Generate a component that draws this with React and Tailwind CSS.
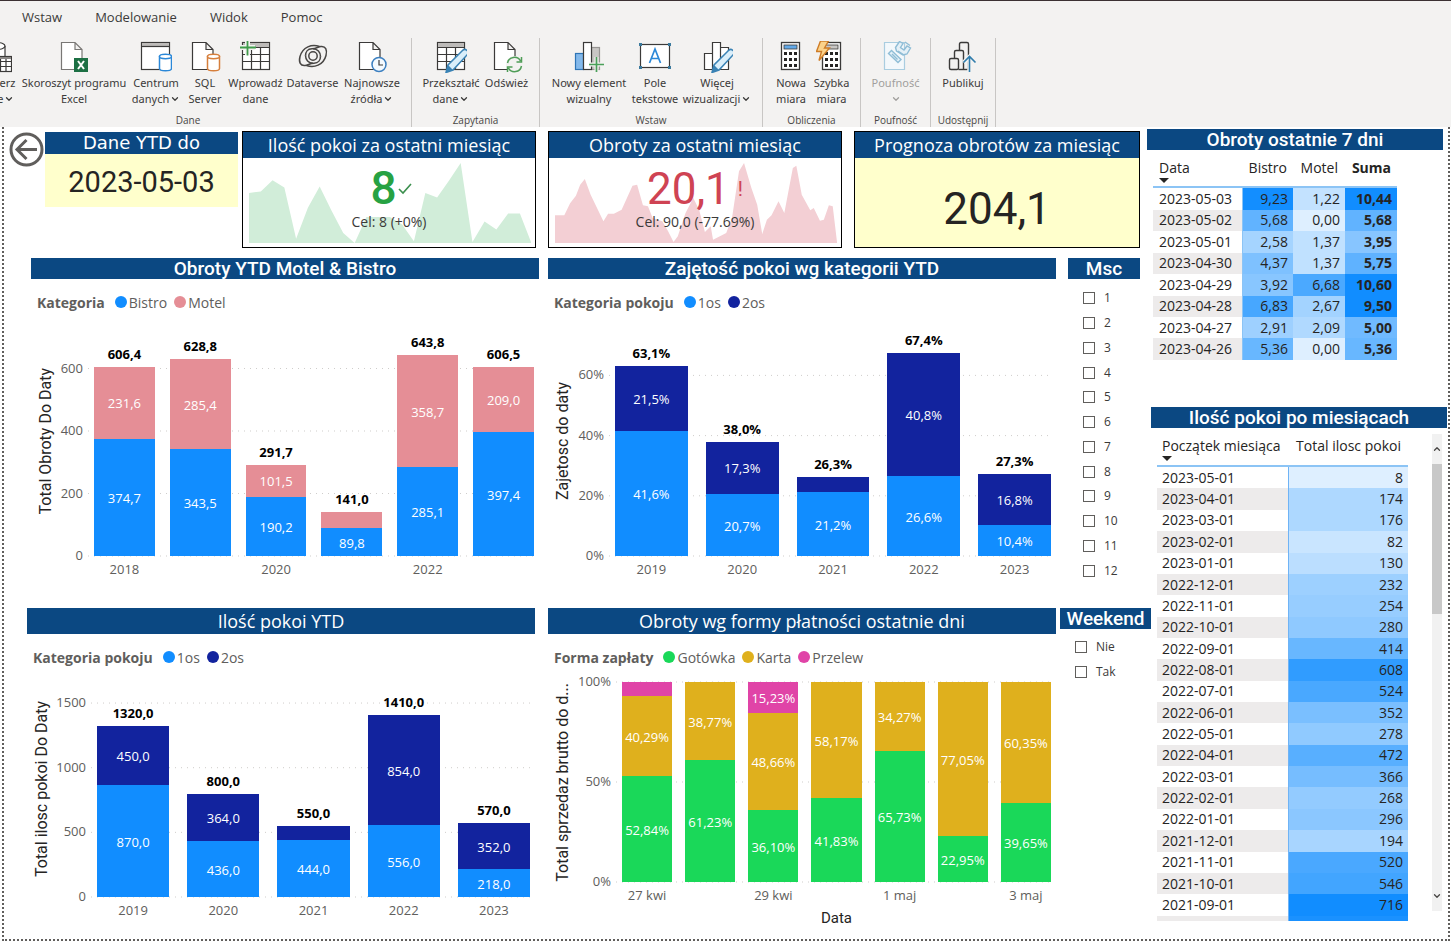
import { ChevronDown, ChevronUp } from "lucide-react";

const BLUE = "#118dff";
const NAVY = "#12239e";
const PINK = "#e58e96";
const GREEN = "#1ad859";
const GOLD = "#dfb01d";
const MAGENTA = "#e044a7";

const INK = "#3b3a39";

/* ---------- ribbon icons ---------- */

function Icon({ children }) {
  return (
    <svg viewBox="0 0 32 32" className="w-8 h-8 shrink-0" fill="none" strokeWidth="1.2" aria-hidden="true">
      {children}
    </svg>
  );
}

const Page = ({ stroke = INK }) => (
  <path d="M3.5 1.5h13.5l7 7v20H3.5zM17 1.5v7h7" fill="#fff" stroke={stroke} />
);

const Cylinder = ({ color }) => (
  <>
    <path d="M19.500 15.500v12c0 3 12 3 12 0v-12z" fill="#fff" stroke={color} strokeWidth="1.500" />
    <ellipse cx="25.500" cy="15.500" rx="6" ry="2.200" fill="#fff" stroke={color} strokeWidth="1.500" />
  </>
);

const Pencil = () => (
  <>
    <path
      d="M11 31.500l2-7.500L27.500 9.500a3 3 0 0 1 4.500 4.500L18 29z"
      fill="#d9eefa"
      stroke="#3a83b5"
      strokeWidth="1.500"
    />
    <path d="M11 31.500l2-7.500 5 5z" fill="#3a83b5" />
  </>
);

const Grid = () => (
  <>
    <rect x="2.500" y="1.500" width="27" height="27" fill="#fff" stroke={INK} />
    <rect x="3" y="2" width="26" height="4" fill="#bdbbb9" />
    <path d="M2.500 6.500h27M2.500 13.500h27M2.500 20.500h27M11.500 6.500v22M20.500 6.500v22" stroke={INK} />
  </>
);

const DatabaseTableIcon = () => (
  <Icon>
    <path d="M9 5v20c0 4 16 4 16 0V5" fill="#fff" stroke={INK} />
    <ellipse cx="17" cy="5" rx="8" ry="3.500" fill="#fff" stroke={INK} />
    <rect x="14.500" y="15.500" width="17" height="15" fill="#fff" stroke={INK} />
    <path d="M15 17h16" stroke="#8a8886" strokeWidth="2" />
    <path d="M14.500 20.500h17M14.500 25.500h17M20.500 18v12M26 18v12" stroke={INK} />
  </Icon>
);

const ExcelIcon = () => (
  <Icon>
    <Page stroke="#797775" />
    <rect x="16" y="17" width="14" height="14" fill="#1d7044" />
    <path d="M20 20l6 8M26 20l-6 8" stroke="#fff" strokeWidth="2" />
  </Icon>
);

const HubIcon = () => (
  <Icon>
    <rect x="1.500" y="1.500" width="28" height="27" fill="#fff" stroke={INK} />
    <rect x="2" y="2" width="27" height="3.500" fill="#bdbbb9" />
    <path d="M1.500 5.500h28" stroke={INK} />
    <Cylinder color="#2b88d8" />
  </Icon>
);

const SqlIcon = () => (
  <Icon>
    <Page />
    <g transform="translate(-1 0)">
      <Cylinder color="#d67f3c" />
    </g>
  </Icon>
);

const EnterDataIcon = () => (
  <Icon>
    <Grid />
    <path d="M0 6.500h15M7.500 -1v15" stroke="#f3f2f1" strokeWidth="5" />
    <path d="M0 6.500h16M7.500 0v14.500" stroke="#3f9b4b" strokeWidth="1.800" />
  </Icon>
);

const DataverseIcon = () => (
  <Icon>
    <g stroke="#484644" strokeWidth="1.500">
      <path d="M22.500 5.500C15 2.500 5.500 6 3 15.500c-1.500 6 .5 9.500 5 9 3-.3 5-2.200 9-2.200 4.500 0 6.500-3.500 6.500-7" />
      <path d="M9.500 24.500c7.500 3 17-.5 19.500-10 1.500-6-.5-9.500-5-9-3 .3-5 2.200-9 2.200-4.500 0-6.500 3.500-6.500 7" />
      <path d="M8.500 14.500c0 4 3 7.800 7.500 7.800M23.500 15.500c0-4-3-7.800-7.500-7.800" />
      <circle cx="16" cy="15" r="4.200" />
    </g>
  </Icon>
);

const RecentIcon = () => (
  <Icon>
    <Page />
    <circle cx="23" cy="23.500" r="7" fill="#f4faff" stroke="#3b7fc0" strokeWidth="1.500" />
    <path d="M23 19v5h4" stroke={INK} />
  </Icon>
);

const TransformIcon = () => (
  <Icon>
    <Grid />
    <Pencil />
  </Icon>
);

const RefreshIcon = () => (
  <Icon>
    <Page />
    <circle cx="23.500" cy="23.500" r="8.500" fill="#f3f2f1" />
    <path
      d="M16.500 22a7 7 0 0 1 13-2M30.500 16v5h-5M30.500 25a7 7 0 0 1-13 2M16.500 31v-5h5"
      stroke="#4f9d57"
      strokeWidth="1.500"
    />
  </Icon>
);

const NewVisualIcon = () => (
  <Icon>
    <rect x="2.500" y="12.500" width="8" height="16" fill="#83b9eb" stroke="#2e75b6" />
    <rect x="18.500" y="6.500" width="8" height="22" fill="#c8c6c4" stroke="#979593" />
    <rect x="10.500" y="1.500" width="8" height="27" fill="#fff" stroke={INK} />
    <path d="M16 23.500h15M23.500 16v15" stroke="#f3f2f1" strokeWidth="4" />
    <path d="M16 23.500h15M23.500 16v15" stroke="#4aa05a" strokeWidth="1.700" />
  </Icon>
);

const TextBoxIcon = () => (
  <Icon>
    <rect x="1.500" y="3.500" width="29" height="23" fill="#fff" stroke={INK} />
    <path d="M0 2h3v3h-3zM29 2h3v3h-3zM0 25h3v3h-3zM29 25h3v3h-3z" fill="#3b7a9e" />
    <path d="M10.500 22L16 8l5.500 14M12.300 17.500h7.400" stroke="#2b88d8" strokeWidth="1.700" />
  </Icon>
);

const MoreVisualsIcon = () => (
  <Icon>
    <path d="M3.500 12.500h8v16h-8zM19.500 6.500h8v22h-8zM11.500 1.500h8v27h-8z" fill="#fff" stroke={INK} />
    <Pencil />
  </Icon>
);

const CalcBody = ({ x, top }) => (
  <g transform={`translate(${x} 0)`}>
    <rect x="0.500" y="1.500" width="18" height="27" fill="#fff" stroke={INK} strokeWidth="1.300" />
    <rect x="3" y="4" width="13" height="4" fill={top} stroke={INK} strokeWidth="0.800" />
    <path
      d="M3 11h3v3h-3zM8 11h3v3h-3zM13 11h3v3h-3zM3 17h3v3h-3zM8 17h3v3h-3zM13 17h3v3h-3zM3 23h3v3h-3zM8 23h3v3h-3zM13 23h3v3h-3z"
      fill="#252423"
    />
  </g>
);

const MeasureIcon = () => (
  <Icon>
    <CalcBody x={6} top="#62a9e8" />
  </Icon>
);

const QuickMeasureIcon = () => (
  <Icon>
    <CalcBody x={6} top="#c8c6c4" />
    <path d="M4.500 0h8l-4 7h5L3 19.500l2.500-9H.5z" fill="#fbd28a" stroke="#cf7d27" strokeWidth="1.400" />
  </Icon>
);

const SensitivityIcon = () => (
  <Icon>
    <path d="M4.500 1.500h20v27h-20z" fill="#f3f8fb" stroke="#a9cde0" />
    <g stroke="#8fbdd6" strokeWidth="1.400" fill="#e4f0f7">
      <path d="M8.500 12.500l3-3 9.500 9-3 3z" />
      <path d="M12 13l5.500 5.500" />
      <path d="M15.500 6.500l4-6 3.500 2-2.500 4 3.500 2.500 3-4 3.500 2-3.500 6-4 1-6.500-4z" />
      <path d="M18 10l6 4M25 1l5 3.500" />
    </g>
  </Icon>
);

const PublishIcon = () => (
  <Icon>
    <path d="M12.500 9V3q0-1.500 1.500-1.500h6q1.500 0 1.500 1.500v25.500" stroke={INK} strokeWidth="1.400" />
    <path d="M7.500 17v-6q0-1.500 1.500-1.500h6q1.500 0 1.500 1.500v17.500" stroke={INK} strokeWidth="1.400" />
    <rect x="2.500" y="17.500" width="9" height="11" rx="1.500" stroke={INK} strokeWidth="1.400" />
    <path d="M11.500 28.500h9" stroke={INK} strokeWidth="1.400" />
    <path d="M22.500 30V16M16.500 21.500l6-6 6 6" stroke="#f3f2f1" strokeWidth="4" />
    <path d="M22.500 31V16M16.500 21.500l6-6 6 6" stroke="#2f7cab" strokeWidth="1.600" />
  </Icon>
);

/* ---------- ribbon ---------- */

const tabs = ["Wstaw", "Modelowanie", "Widok", "Pomoc"];

const groups = [
  {
    name: "Dane",
    items: [
      { icon: DatabaseTableIcon, lines: ["Pobierz", "dane"], menu: true, width: "w-[46px]" },
      { icon: ExcelIcon, lines: ["Skoroszyt programu", "Excel"], width: "w-[110px]" },
      { icon: HubIcon, lines: ["Centrum", "danych"], menu: true, width: "w-[54px]" },
      { icon: SqlIcon, lines: ["SQL", "Server"], width: "w-[44px]" },
      { icon: EnterDataIcon, lines: ["Wprowadź", "dane"], width: "w-[57px]" },
      { icon: DataverseIcon, lines: ["Dataverse"], width: "w-[57px]" },
      { icon: RecentIcon, lines: ["Najnowsze", "źródła"], menu: true, width: "w-[62px]" },
    ],
  },
  {
    name: "Zapytania",
    items: [
      { icon: TransformIcon, lines: ["Przekształć", "dane"], menu: true, width: "w-[62px]" },
      { icon: RefreshIcon, lines: ["Odśwież"], width: "w-[49px]" },
    ],
  },
  {
    name: "Wstaw",
    items: [
      { icon: NewVisualIcon, lines: ["Nowy element", "wizualny"], width: "w-[82px]" },
      { icon: TextBoxIcon, lines: ["Pole", "tekstowe"], width: "w-[50px]" },
      { icon: MoreVisualsIcon, lines: ["Więcej", "wizualizacji"], menu: true, width: "w-[74px]" },
    ],
  },
  {
    name: "Obliczenia",
    items: [
      { icon: MeasureIcon, lines: ["Nowa", "miara"], width: "w-[40px]" },
      { icon: QuickMeasureIcon, lines: ["Szybka", "miara"], width: "w-[41px]" },
    ],
  },
  {
    name: "Poufność",
    items: [{ icon: SensitivityIcon, lines: ["Poufność", ""], menu: true, disabled: true, width: "w-[53px]" }],
  },
  {
    name: "Udostępnij",
    items: [{ icon: PublishIcon, lines: ["Publikuj"], width: "w-[48px]" }],
  },
];

function RibbonButton({ item }) {
  const IconComponent = item.icon;
  return (
    <button
      type="button"
      disabled={item.disabled}
      className={`${item.width} flex flex-col items-center font-['Noto_Sans',sans-serif] text-[11px] leading-4 whitespace-nowrap text-[#3b3a39] disabled:text-[#a19f9d]`}
    >
      <IconComponent />
      <span className="mt-0.5">{item.lines[0]}</span>
      {item.lines.length > 1 && (
        <span className="flex items-center h-4">
          {item.lines[1]}
          {item.menu && <ChevronDown className="w-2.5 h-2.5 ml-px" strokeWidth={3} />}
        </span>
      )}
    </button>
  );
}

function Ribbon() {
  return (
    <header className="bg-[#f3f2f1] border-t border-[#3b3033] overflow-hidden h-[127px] shrink-0">
      <nav className="flex gap-[33px] pl-[22px] h-[34px] items-center text-[13px] text-[#3b3a39]">
        {tabs.map((tab) => (
          <button key={tab} type="button">
            {tab}
          </button>
        ))}
      </nav>
      <div className="flex -ml-[35px] mt-[3px]">
        {groups.map((group) => (
          <section key={group.name} className="flex flex-col px-2 border-r border-[#c8c6c4] h-[89px]">
            <div className="flex items-start h-[76px] pt-[3px]">
              {group.items.map((item) => (
                <RibbonButton key={item.lines[0]} item={item} />
              ))}
            </div>
            <p className="w-0 min-w-full flex justify-center text-[10px] leading-3 whitespace-nowrap text-[#484644]">
              {group.name}
            </p>
          </section>
        ))}
      </div>
    </header>
  );
}

/* ---------- charts ---------- */

function PanelTitle({ children, tall, plain }) {
  return (
    <h2
      className={`bg-[#0b4882] text-white text-center whitespace-nowrap ${tall ? "leading-[26px]" : "leading-[21px]"} ${
        plain
          ? "font-['Open_Sans',sans-serif] font-normal text-[18px]"
          : "font-[Roboto,sans-serif] font-medium text-[19px]"
      }`}
    >
      {children}
    </h2>
  );
}

function StackedChart({
  title,
  tall,
  plain,
  legendTitle,
  series,
  axisTitle,
  axisWidth,
  ticks,
  unit,
  plotHeight,
  plotClass,
  gapClass,
  bars,
  xTitle,
}) {
  return (
    <section className="flex-1 min-w-0">
      <PanelTitle tall={tall} plain={plain}>
        {title}
      </PanelTitle>
      <div className="flex items-center gap-[7px] h-6 mt-[11px] pl-[6px] text-[14px] text-[#605e5c]">
        <span className="font-bold mr-[3px]">{legendTitle}</span>
        {series.map((s) => (
          <span key={s.name} className="flex items-center gap-[2px]">
            <i className="w-3 h-3 rounded-full" style={{ background: s.color }} />
            {s.name}
          </span>
        ))}
      </div>
      <div className="flex mt-[13px] pr-[5px]">
        <div className={`${plotClass} w-[30px] flex items-center justify-center shrink-0`}>
          <span className="[writing-mode:vertical-rl] rotate-180 whitespace-nowrap font-[Roboto,sans-serif] text-[16px] text-[#252423]">
            {axisTitle}
          </span>
        </div>
        <div className={`${plotClass} ${axisWidth} relative shrink-0 text-[13px] leading-4 text-[#605e5c]`}>
          {ticks.map((t) => (
            <span key={t.label} className="absolute right-0" style={{ bottom: t.value * unit - 7 }}>
              {t.label}
            </span>
          ))}
        </div>
        <div className="flex-1 min-w-0 pl-[11px]">
          <div className={`${plotClass} ${gapClass} relative flex items-end`}>
            <svg className="absolute inset-0 w-full h-full overflow-visible" aria-hidden="true">
              {ticks.map((t) => (
                <line
                  key={t.label}
                  x1="-6"
                  x2="100%"
                  y1={plotHeight - t.value * unit}
                  y2={plotHeight - t.value * unit}
                  stroke="#cfcdcb"
                  strokeDasharray="1 5"
                />
              ))}
            </svg>
            {bars.map((bar) => (
              <div key={bar.id} className="relative flex-1 min-w-0 flex flex-col text-[13px]">
                {bar.total && (
                  <strong className="flex justify-center whitespace-nowrap leading-[18px] mb-1 text-black">
                    {bar.total}
                  </strong>
                )}
                {bar.parts.map((part) => (
                  <div
                    key={part.color}
                    className="flex items-center justify-center pt-[3px] text-white whitespace-nowrap"
                    style={{ height: part.value * unit, background: part.color }}
                  >
                    {part.label}
                  </div>
                ))}
              </div>
            ))}
          </div>
          <div className={`${gapClass} flex h-7 items-center text-[13px] text-[#605e5c]`}>
            {bars.map((bar) => (
              <span key={bar.id} className="flex-1 min-w-0 flex justify-center whitespace-nowrap">
                {bar.tick}
              </span>
            ))}
          </div>
          {xTitle && (
            <p className="text-center font-[Roboto,sans-serif] text-[15px] leading-4 text-[#252423]">{xTitle}</p>
          )}
        </div>
      </div>
    </section>
  );
}

// every bar lists its parts from top to bottom: [colour, value, label]
const toBars = (rows) =>
  rows.map(([id, tick, total, ...parts]) => ({
    id,
    tick,
    total,
    parts: parts.map(([color, value, label]) => ({ color, value, label })),
  }));

const turnover = toBars([
  ["2018", "2018", "606,4", [PINK, 231.6, "231,6"], [BLUE, 374.7, "374,7"]],
  ["2019", "", "628,8", [PINK, 285.4, "285,4"], [BLUE, 343.5, "343,5"]],
  ["2020", "2020", "291,7", [PINK, 101.5, "101,5"], [BLUE, 190.2, "190,2"]],
  ["2021", "", "141,0", [PINK, 51.2, ""], [BLUE, 89.8, "89,8"]],
  ["2022", "2022", "643,8", [PINK, 358.7, "358,7"], [BLUE, 285.1, "285,1"]],
  ["2023", "", "606,5", [PINK, 209, "209,0"], [BLUE, 397.4, "397,4"]],
]);

const occupancy = toBars([
  ["2019", "2019", "63,1%", [NAVY, 21.5, "21,5%"], [BLUE, 41.6, "41,6%"]],
  ["2020", "2020", "38,0%", [NAVY, 17.3, "17,3%"], [BLUE, 20.7, "20,7%"]],
  ["2021", "2021", "26,3%", [NAVY, 5.1, ""], [BLUE, 21.2, "21,2%"]],
  ["2022", "2022", "67,4%", [NAVY, 40.8, "40,8%"], [BLUE, 26.6, "26,6%"]],
  ["2023", "2023", "27,3%", [NAVY, 16.8, "16,8%"], [BLUE, 10.4, "10,4%"]],
]);

const rooms = toBars([
  ["2019", "2019", "1320,0", [NAVY, 450, "450,0"], [BLUE, 870, "870,0"]],
  ["2020", "2020", "800,0", [NAVY, 364, "364,0"], [BLUE, 436, "436,0"]],
  ["2021", "2021", "550,0", [NAVY, 106, ""], [BLUE, 444, "444,0"]],
  ["2022", "2022", "1410,0", [NAVY, 854, "854,0"], [BLUE, 556, "556,0"]],
  ["2023", "2023", "570,0", [NAVY, 352, "352,0"], [BLUE, 218, "218,0"]],
]);

const payments = toBars([
  ["27", "27 kwi", "", [MAGENTA, 6.87, ""], [GOLD, 40.29, "40,29%"], [GREEN, 52.84, "52,84%"]],
  ["28", "", "", [GOLD, 38.77, "38,77%"], [GREEN, 61.23, "61,23%"]],
  ["29", "29 kwi", "", [MAGENTA, 15.23, "15,23%"], [GOLD, 48.66, "48,66%"], [GREEN, 36.1, "36,10%"]],
  ["30", "", "", [GOLD, 58.17, "58,17%"], [GREEN, 41.83, "41,83%"]],
  ["1", "1 maj", "", [GOLD, 34.27, "34,27%"], [GREEN, 65.73, "65,73%"]],
  ["2", "", "", [GOLD, 77.05, "77,05%"], [GREEN, 22.95, "22,95%"]],
  ["3", "3 maj", "", [GOLD, 60.35, "60,35%"], [GREEN, 39.65, "39,65%"]],
]);

const roomSeries = [
  { name: "1os", color: BLUE },
  { name: "2os", color: NAVY },
];

/* ---------- cards and slicers ---------- */

const roomTrend =
  "716,206 750,202 784,168 818,190 852,342 886,250 920,187 954,258 988,325 1021,355 1055,278 1089,278 1123,278 1158,300 1192,350 1225,206 1259,220 1293,170 1327,117 1361,352 1396,291 1430,315 1464,267 1498,267 1530,352 1530,355 716,355";
const turnoverTrend =
  "38,272 62,272 77,236 92,213 103,180 115,163 130,210 163,290 175,267 190,267 210,255 238,183 250,180 265,242 278,245 290,280 315,290 330,320 344,352 355,335 375,265 395,220 410,255 425,322 440,305 446,345 480,325 495,280 513,140 526,115 545,190 560,240 573,328 585,285 597,272 615,230 630,265 652,130 661,123 675,210 697,257 706,250 722,288 732,285 745,242 755,245 766,352 766,355 38,355";

function CardTitle({ children }) {
  return (
    <h2 className="bg-[#0b4882] text-white text-center whitespace-nowrap font-['Open_Sans',sans-serif] text-[18px] leading-[26px]">
      {children}
    </h2>
  );
}

function KpiCard({ title, points, viewBox, areaClass, value, valueClass, mark, goal }) {
  return (
    <section className="flex-1 min-w-0 border border-black h-[117px]">
      <CardTitle>{title}</CardTitle>
      <div className="relative h-[89px] text-center">
        <svg
          className="absolute bottom-1 left-[6px] right-1 w-[calc(100%-10px)] h-20"
          viewBox={viewBox}
          preserveAspectRatio="none"
          aria-hidden="true"
        >
          <polygon points={points} className={areaClass} />
        </svg>
        <p
          className={`relative flex items-center justify-center h-[52px] pt-[9px] font-[Roboto,sans-serif] ${valueClass}`}
        >
          {value}
          {mark}
        </p>
        <p className="relative text-[14px] leading-6 text-[#3b3a39]">{goal}</p>
      </div>
    </section>
  );
}

function Slicer({ title, options, widthClass, listClass, itemClass }) {
  return (
    <fieldset className={widthClass}>
      <PanelTitle>{title}</PanelTitle>
      <div className={`grid ${listClass}`}>
        {options.map((option) => (
          <label key={option} className={`flex items-center gap-[9px] text-[12px] text-[#3b3a39] ${itemClass}`}>
            <input type="checkbox" className="appearance-none w-3 h-3 border border-[#605e5c] bg-white checked:bg-[#605e5c]" />
            {option}
          </label>
        ))}
      </div>
    </fieldset>
  );
}

/* ---------- tables ---------- */

const lastDays = [
  ["2023-05-03", "9,23", "1,22", "10,44"],
  ["2023-05-02", "5,68", "0,00", "5,68"],
  ["2023-05-01", "2,58", "1,37", "3,95"],
  ["2023-04-30", "4,37", "1,37", "5,75"],
  ["2023-04-29", "3,92", "6,68", "10,60"],
  ["2023-04-28", "6,83", "2,67", "9,50"],
  ["2023-04-27", "2,91", "2,09", "5,00"],
  ["2023-04-26", "5,36", "0,00", "5,36"],
];

const months = [
  ["2023-05-01", 8],
  ["2023-04-01", 174],
  ["2023-03-01", 176],
  ["2023-02-01", 82],
  ["2023-01-01", 130],
  ["2022-12-01", 232],
  ["2022-11-01", 254],
  ["2022-10-01", 280],
  ["2022-09-01", 414],
  ["2022-08-01", 608],
  ["2022-07-01", 524],
  ["2022-06-01", 352],
  ["2022-05-01", 278],
  ["2022-04-01", 472],
  ["2022-03-01", 366],
  ["2022-02-01", 268],
  ["2022-01-01", 296],
  ["2021-12-01", 194],
  ["2021-11-01", 520],
  ["2021-10-01", 546],
  ["2021-09-01", 716],
];

// pale blue for the minimum, full blue for the maximum
function heat(value, min, max) {
  const t = Math.min(1, Math.max(0, (value - min) / (max - min)));
  const mix = (a, b) => Math.round(a + (b - a) * t);
  return `rgb(${mix(222, 17)}, ${mix(239, 141)}, 255)`;
}

function SortMark() {
  return <i className="block w-0 h-0 border-x-[5px] border-x-transparent border-t-[5px] border-t-[#252423]" />;
}

function DaysTable() {
  return (
    <table className="w-[244px] h-[202px] ml-[6px] mt-2 text-[14px] leading-5 text-[#252423]">
      <thead>
        <tr className="align-top h-[29px] border-b-2 border-[#8cc4f5]">
          <th className="font-normal text-left pl-[6px] w-[89px]">
            Data
            <SortMark />
          </th>
          <th className="font-normal text-right pr-[6px] w-[51px]">Bistro</th>
          <th className="font-normal text-right pr-[7px] w-[52px]">Motel</th>
          <th className="text-right pr-[6px] w-[52px]">Suma</th>
        </tr>
      </thead>
      <tbody>
        {lastDays.map(([date, ...values]) => (
          <tr key={date} className="even:bg-[#edebeb]">
            <td className="pl-[6px] border-r border-[#8cc4f5]">{date}</td>
            {values.map((v, i) => (
              <td
                key={i}
                className={`text-right pr-[5px] ${i === 2 ? "font-bold" : ""}`}
                style={{ background: heat(parseFloat(v.replace(",", ".")), 0, 9.3) }}
              >
                {v}
              </td>
            ))}
          </tr>
        ))}
      </tbody>
    </table>
  );
}

function MonthsTable() {
  return (
    <div className="flex justify-between pl-[6px] pr-[5px] pt-[6px]">
      <div className="h-[485px] mt-0.5 overflow-hidden">
        <table className="w-[251px] h-[501px] text-[14px] leading-5 text-[#252423]">
          <thead>
            <tr className="align-top h-[30px] border-b-2 border-[#8cc4f5]">
              <th className="font-normal text-left whitespace-nowrap pl-[5px] w-[131px]">
                Początek miesiąca
                <SortMark />
              </th>
              <th className="font-normal text-right whitespace-nowrap pr-[7px] w-[120px]">Total ilosc pokoi</th>
            </tr>
          </thead>
          <tbody>
            {months.map(([date, count]) => (
              <tr key={date} className="even:bg-[#edebeb]">
                <td className="pl-[5px] border-r border-[#6fb3f5]">{date}</td>
                <td className="text-right pr-[5px]" style={{ background: heat(count, 8, 716) }}>
                  {count}
                </td>
              </tr>
            ))}
            <tr className="bg-[#edebeb]">
              <td className="border-r border-[#6fb3f5]">&nbsp;</td>
              <td className="bg-[#1a91ff]" />
            </tr>
          </tbody>
        </table>
      </div>
      <div className="w-[10px] h-[477px] bg-[#f1f1f1] flex flex-col items-center justify-between">
        <div className="flex flex-col items-center w-full">
          <ChevronUp className="w-[10px] h-[30px] text-[#484644]" strokeWidth={3} />
          <div className="w-full h-[150px] bg-[#c8c8c8]" />
        </div>
        <ChevronDown className="w-[10px] h-[30px] text-[#484644]" strokeWidth={3} />
      </div>
    </div>
  );
}

export default function App() {
  return (
    <div className="min-h-screen flex flex-col bg-white font-['Open_Sans',sans-serif]">
      <Ribbon />
      <main className="flex-1 flex ml-[2px] mr-px border-x-2 border-b-2 border-dotted border-[#605e5c]">
        <div className="flex-1 min-w-0">
          <div className="flex items-start h-[131px] pt-1 pl-[5px] pr-[11px]">
            <button type="button" aria-label="Wstecz" className="w-[35px] h-[35px] mt-px mr-px shrink-0">
              <svg viewBox="0 0 35 35" fill="none" stroke="#605e5c" strokeWidth="3">
                <circle cx="17.500" cy="17.500" r="15.500" />
                <path d="M28 17.500H9M17.500 8L8 17.500 17.500 27" />
              </svg>
            </button>
            <section className="w-[193px] mt-px mr-1 shrink-0">
              <h2 className="bg-[#0b4882] text-white text-center font-['DejaVu_Sans',sans-serif] text-[18px] leading-[22px]">
                Dane YTD do
              </h2>
              <p className="bg-[#ffffcc] text-center pt-[3px] font-[Roboto,sans-serif] text-[29px] leading-[50px] text-[#252423]">
                2023-05-03
              </p>
            </section>
            <div className="flex-1 min-w-0 flex gap-3">
              <KpiCard
                title="Ilość pokoi za ostatni miesiąc"
                points={roomTrend}
                viewBox="716 117 814 238"
                areaClass="fill-[#d1edd9]"
                value="8"
                valueClass="font-medium text-[46px] text-[#27a243] pl-1"
                mark={
                  <svg viewBox="0 0 14 12" className="w-[14px] h-3 ml-px" fill="none" stroke="#3b8f4d" strokeWidth="1.600">
                    <path d="M1 6l4 4 8-9" />
                  </svg>
                }
                goal="Cel: 8 (+0%)"
              />
              <KpiCard
                title="Obroty za ostatni miesiąc"
                points={turnoverTrend}
                viewBox="38 115 728 240"
                areaClass="fill-[#f3cfd4]"
                value="20,1"
                valueClass="text-[44px] text-[#cf4353]"
                mark={<span className="text-[20px] ml-2">!</span>}
                goal="Cel: 90,0 (-77.69%)"
              />
              <section className="w-[286px] shrink-0 border border-black h-[117px]">
                <CardTitle>Prognoza obrotów za miesiąc</CardTitle>
                <p className="bg-[#ffffcc] text-center h-[89px] pt-[13px] font-[Roboto,sans-serif] text-[44px] leading-[76px] text-[#252423]">
                  204,1
                </p>
              </section>
            </div>
          </div>

          <div className="flex items-start h-[350px] pl-[27px] pr-[11px]">
            <StackedChart
              title="Obroty YTD Motel & Bistro"
              legendTitle="Kategoria"
              series={[
                { name: "Bistro", color: BLUE },
                { name: "Motel", color: PINK },
              ]}
              axisTitle="Total Obroty Do Daty"
              axisWidth="w-[22px]"
              ticks={[
                { label: "0", value: 0 },
                { label: "200", value: 200 },
                { label: "400", value: 400 },
                { label: "600", value: 600 },
              ]}
              unit={0.3125}
              plotHeight={229}
              plotClass="h-[229px]"
              gapClass="gap-[15px]"
              bars={turnover}
            />
            <div className="w-[9px] shrink-0" />
            <StackedChart
              title="Zajętość pokoi wg kategorii YTD"
              legendTitle="Kategoria pokoju"
              series={roomSeries}
              axisTitle="Zajetosc do daty"
              axisWidth="w-[26px]"
              ticks={[
                { label: "0%", value: 0 },
                { label: "20%", value: 20 },
                { label: "40%", value: 40 },
                { label: "60%", value: 60 },
              ]}
              unit={3.01}
              plotHeight={229}
              plotClass="h-[229px]"
              gapClass="gap-[18px]"
              bars={occupancy}
            />
            <Slicer
              title="Msc"
              options={["1", "2", "3", "4", "5", "6", "7", "8", "9", "10", "11", "12"]}
              widthClass="w-[72px] ml-3 shrink-0"
              listClass="h-[297px] mt-[7px] pl-[15px]"
              itemClass=""
            />
          </div>

          <div className="flex items-start pl-[23px]">
            <StackedChart
              title="Ilość pokoi YTD"
              tall
              plain
              legendTitle="Kategoria pokoju"
              series={roomSeries}
              axisTitle="Total ilosc pokoi Do Daty"
              axisWidth="w-[29px]"
              ticks={[
                { label: "0", value: 0 },
                { label: "500", value: 500 },
                { label: "1000", value: 1000 },
                { label: "1500", value: 1500 },
              ]}
              unit={0.1293}
              plotHeight={215}
              plotClass="h-[215px]"
              gapClass="gap-[18px]"
              bars={rooms}
            />
            <div className="w-[13px] shrink-0" />
            <StackedChart
              title="Obroty wg formy płatności ostatnie dni"
              tall
              plain
              legendTitle="Forma zapłaty"
              series={[
                { name: "Gotówka", color: GREEN },
                { name: "Karta", color: GOLD },
                { name: "Przelew", color: MAGENTA },
              ]}
              axisTitle="Total sprzedaz brutto do d..."
              axisWidth="w-[33px]"
              ticks={[
                { label: "0%", value: 0 },
                { label: "50%", value: 50 },
                { label: "100%", value: 100 },
              ]}
              unit={2}
              plotHeight={200}
              plotClass="h-[200px]"
              gapClass="gap-[13px]"
              bars={payments}
              xTitle="Data"
            />
            <Slicer
              title="Weekend"
              options={["Nie", "Tak"]}
              widthClass="w-[91px] ml-1 shrink-0"
              listClass="mt-[5px] pl-[15px]"
              itemClass="h-[25px]"
            />
          </div>
        </div>

        <aside className="w-[297px] shrink-0 pt-[2px] pr-px">
          <div className="-ml-1 mr-1 h-[278px]">
            <PanelTitle>Obroty ostatnie 7 dni</PanelTitle>
            <DaysTable />
          </div>
          <PanelTitle>Ilość pokoi po miesiącach</PanelTitle>
          <MonthsTable />
        </aside>
      </main>
    </div>
  );
}
